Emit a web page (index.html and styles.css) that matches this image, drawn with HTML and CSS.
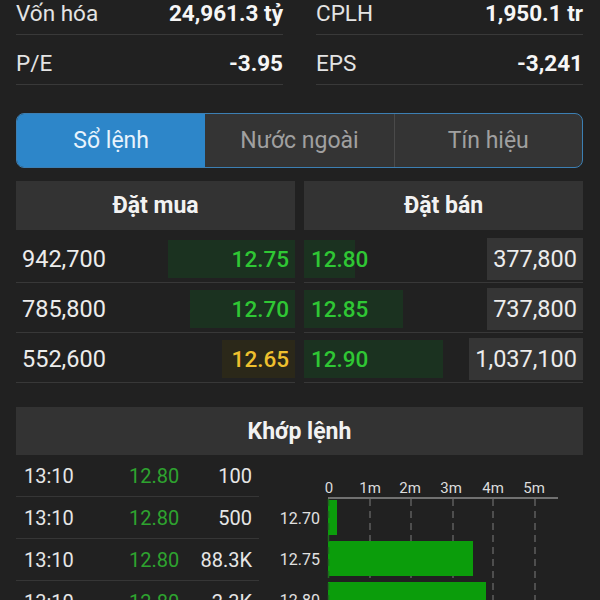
FILE: index.html
```html
<!DOCTYPE html>
<html lang="vi">
<head>
<meta charset="utf-8">
<title>Sổ lệnh</title>
<link rel="stylesheet" href="styles.css">
</head>
<body>
<div class="page">
  <div class="stats">
    <div class="stat"><span class="label">Vốn hóa</span><span class="value">24,961.3 tỷ</span></div>
    <div class="stat"><span class="label">CPLH</span><span class="value">1,950.1 tr</span></div>
    <div class="stat"><span class="label">P/E</span><span class="value">-3.95</span></div>
    <div class="stat"><span class="label">EPS</span><span class="value">-3,241</span></div>
  </div>

  <div class="tabs">
    <div class="tab active">Sổ lệnh</div>
    <div class="tab">Nước ngoài</div>
    <div class="tab divided">Tín hiệu</div>
  </div>

  <div class="book">
    <div class="side buy">
      <div class="side-head">Đặt mua</div>
      <div class="row"><span class="vol">942,700</span><span class="px up" style="--bar:127px">12.75</span></div>
      <div class="row"><span class="vol">785,800</span><span class="px up" style="--bar:105px">12.70</span></div>
      <div class="row"><span class="vol">552,600</span><span class="px ref" style="--bar:73px">12.65</span></div>
    </div>
    <div class="side sell">
      <div class="side-head">Đặt bán</div>
      <div class="row"><span class="px up" style="--bar:51px">12.80</span><span class="vbox">377,800</span></div>
      <div class="row"><span class="px up" style="--bar:99px">12.85</span><span class="vbox">737,800</span></div>
      <div class="row"><span class="px up" style="--bar:139px">12.90</span><span class="vbox">1,037,100</span></div>
    </div>
  </div>

  <div class="match-head">Khớp lệnh</div>
  <div class="match">
    <div class="trades">
      <div class="trade"><span>13:10</span><span class="tp">12.80</span><span class="tv">100</span></div>
      <div class="trade"><span>13:10</span><span class="tp">12.80</span><span class="tv">500</span></div>
      <div class="trade"><span>13:10</span><span class="tp">12.80</span><span class="tv">88.3K</span></div>
      <div class="trade"><span>13:10</span><span class="tp">12.80</span><span class="tv">2.3K</span></div>
    </div>
    <svg class="chart" width="324" height="145" viewBox="0 0 324 145">
      <g class="ticks">
        <text x="69" y="38">0</text>
        <text x="110" y="38">1m</text>
        <text x="150" y="38">2m</text>
        <text x="191" y="38">3m</text>
        <text x="233" y="38">4m</text>
        <text x="274" y="38">5m</text>
      </g>
      <line class="axis" x1="68" y1="43" x2="298" y2="43"/>
      <g class="grid">
        <line x1="110" y1="44" x2="110" y2="145"/>
        <line x1="151" y1="44" x2="151" y2="145"/>
        <line x1="193" y1="44" x2="193" y2="145"/>
        <line x1="233" y1="44" x2="233" y2="145"/>
        <line x1="275" y1="44" x2="275" y2="145"/>
      </g>
      <g class="bars">
        <rect x="68" y="45" width="9" height="35"/>
        <rect x="68" y="86" width="145" height="35"/>
        <rect x="68" y="127" width="158" height="35"/>
      </g>
      <line class="zero" x1="68.5" y1="44" x2="68.5" y2="145"/>
      <g class="labels">
        <text x="60" y="69">12.70</text>
        <text x="60" y="110">12.75</text>
        <text x="60" y="151">12.80</text>
      </g>
    </svg>
  </div>
</div>
</body>
</html>
```

FILE: styles.css
```css
* { box-sizing: border-box; }

html, body {
  margin: 0;
  background: #212121;
  height: 600px;
  overflow: hidden;
}

body {
  font-family: Roboto, "Noto Sans", "Liberation Sans", sans-serif;
  color: #e6e6e6;
}

.page {
  padding: 0 17px 0 16px;
}

/* stats */
.stats {
  display: grid;
  grid-template-columns: 1fr 1fr;
  column-gap: 33px;
  margin-top: -15px;
}

.stat {
  height: 50px;
  padding-top: 7px;
  display: flex;
  align-items: center;
  justify-content: space-between;
  border-bottom: 1px solid #393939;
  font-size: 22.5px;
}

.stat .label { color: #e4e4e4; }
.stat .value { font-weight: 700; color: #f6f6f6; }

/* tabs */
.tabs {
  margin-top: 28px;
  height: 55px;
  display: grid;
  grid-template-columns: 1fr 1fr 1fr;
  border: 1px solid #3c7fb3;
  border-radius: 8px;
  overflow: hidden;
  background: #343434;
}

.tab {
  display: flex;
  align-items: center;
  justify-content: center;
  font-size: 23px;
  color: #a0a0a0;
}

.tab.active {
  background: #2d86c9;
  color: #e8f3fc;
}

.tab.divided { border-left: 1px solid #4a4a4a; }

/* order book */
.book {
  margin-top: 13px;
  display: grid;
  grid-template-columns: 1fr 1fr;
  column-gap: 9px;
}

.side-head {
  height: 49px;
  margin-bottom: 3px;
  background: #333333;
  display: flex;
  align-items: center;
  justify-content: center;
  font-size: 23px;
  font-weight: 700;
  color: #f2f2f2;
}

.row {
  height: 50px;
  padding-top: 3px;
  display: flex;
  align-items: center;
  border-bottom: 1px solid #383838;
  font-size: 23.5px;
}

.vol {
  padding-left: 6px;
  color: #ececec;
}

.px {
  height: 38px;
  display: flex;
  align-items: center;
  font-size: 22.5px;
  font-weight: 500;
  --c: #1b3220;
  background: linear-gradient(var(--c), var(--c)) no-repeat;
  background-size: var(--bar) 100%;
}

.px.up { color: #2fc734; }
.px.ref { color: #efc02e; --c: #2b2819; }

.buy .px {
  flex: 1;
  justify-content: flex-end;
  padding-right: 6px;
  background-position: right top;
}

.sell .px {
  flex: 1;
  padding-left: 7px;
  background-position: left top;
}

.vbox {
  height: 42px;
  display: flex;
  align-items: center;
  padding: 0 6px;
  background: #353535;
  color: #ececec;
}

/* matched orders */
.match-head {
  margin-top: 24px;
  height: 48px;
  background: #333333;
  display: flex;
  align-items: center;
  justify-content: center;
  font-size: 23px;
  font-weight: 700;
  color: #f2f2f2;
}

.match {
  display: grid;
  grid-template-columns: 243px 1fr;
}

.trade {
  height: 42px;
  padding-top: 1px;
  display: grid;
  grid-template-columns: 105px 1fr auto;
  align-items: center;
  padding-left: 8px;
  padding-right: 7px;
  border-bottom: 1px solid #363636;
  font-size: 20px;
  color: #e6e6e6;
}

.tp { color: #2ea32f; }
.tv { text-align: right; }

.chart {
  display: block;
  margin-left: 1px;
  font-family: Roboto, "Noto Sans", sans-serif;
}

.ticks text {
  font-size: 15px;
  fill: #dcdcdc;
  text-anchor: middle;
}

.labels text {
  font-size: 16px;
  fill: #e0e0e0;
  text-anchor: end;
}

.axis { stroke: #8c8c8c; stroke-width: 1.5; }

.grid line, .zero {
  stroke: #5e5e5e;
  stroke-width: 1.5;
  stroke-dasharray: 7 5;
}

.zero { stroke: #1f6a1f; }

.bars rect { fill: #0b9d0b; }
```
